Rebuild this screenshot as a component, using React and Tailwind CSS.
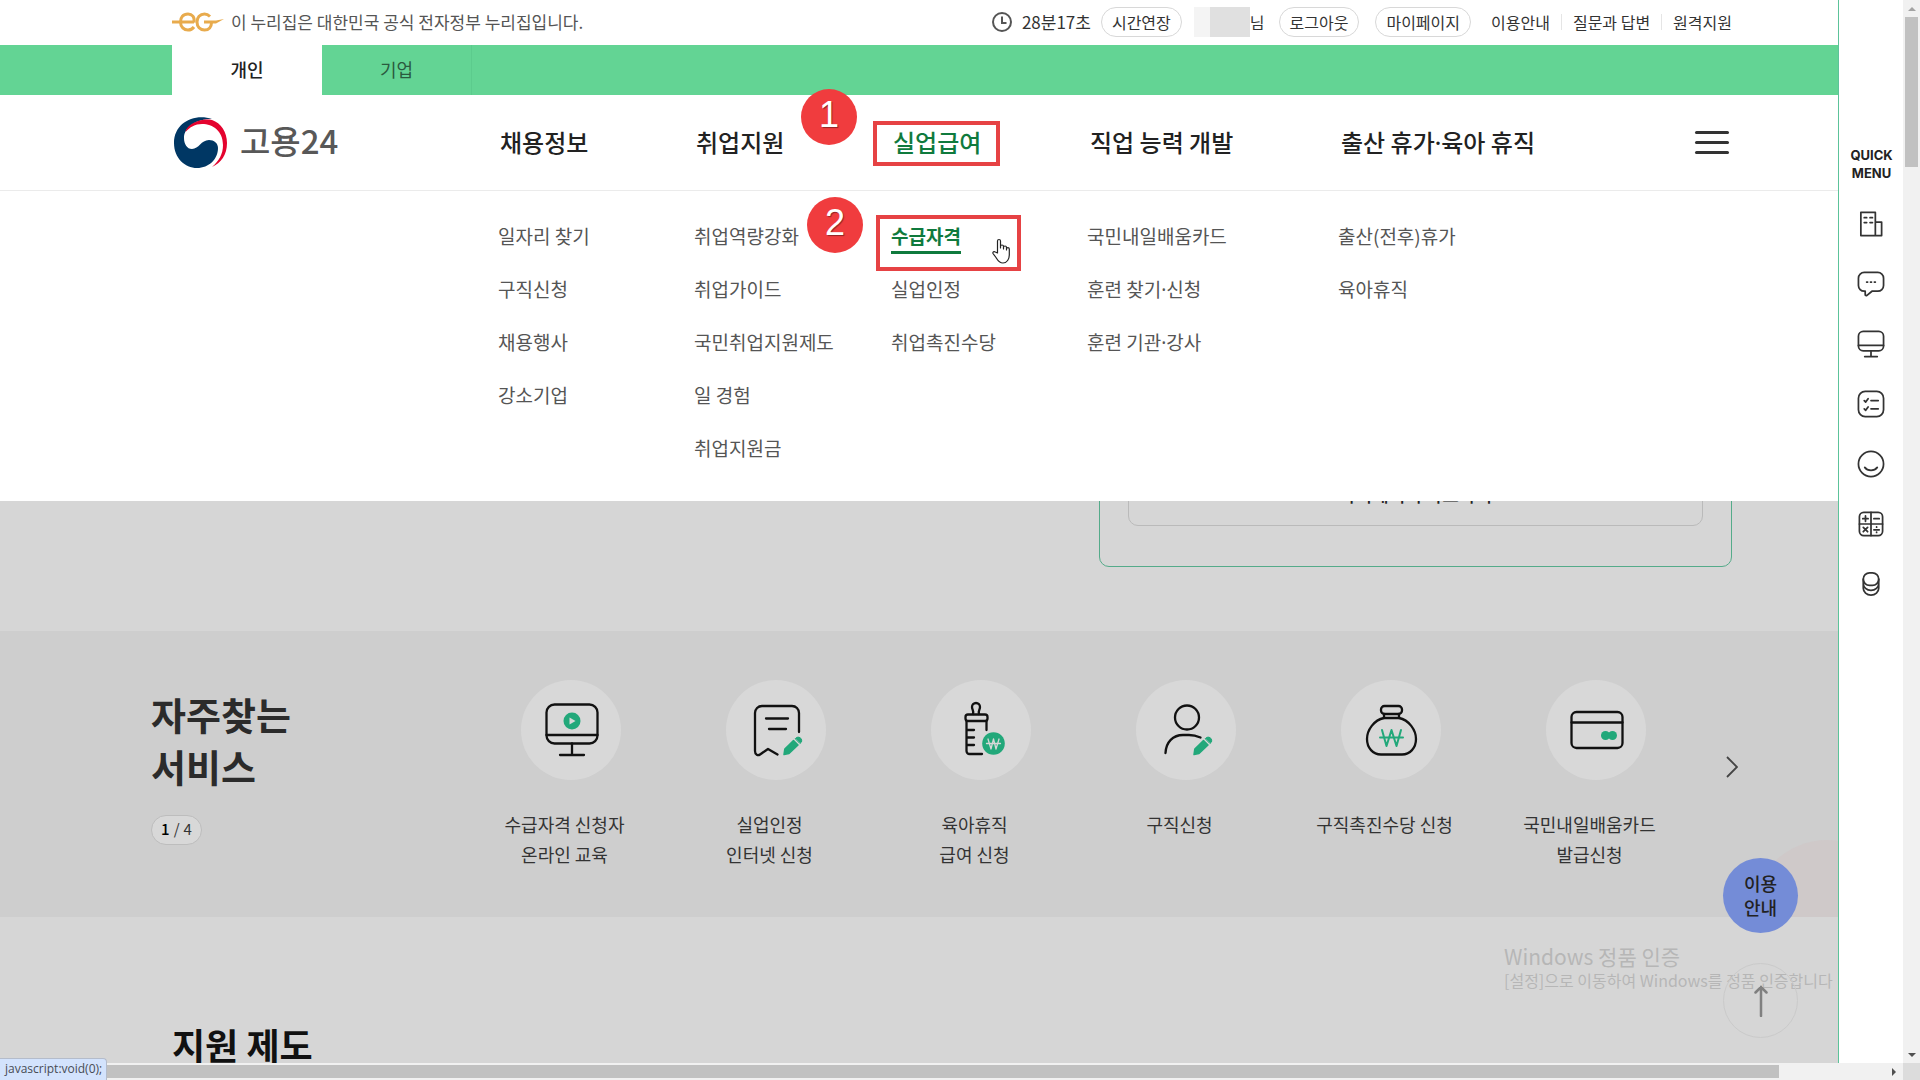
import React from "react";

const menus = [
  {
    title: "채용정보",
    items: ["일자리 찾기", "구직신청", "채용행사", "강소기업"],
  },
  {
    title: "취업지원",
    items: ["취업역량강화", "취업가이드", "국민취업지원제도", "일 경험", "취업지원금"],
  },
  {
    title: "실업급여",
    items: ["수급자격", "실업인정", "취업촉진수당"],
    step: 1,
  },
  {
    title: "직업 능력 개발",
    items: ["국민내일배움카드", "훈련 찾기·신청", "훈련 기관·강사"],
  },
  {
    title: "출산 휴가·육아 휴직",
    items: ["출산(전후)휴가", "육아휴직"],
  },
];

const GREEN = "#22a87a";

const Pencil = () => (
  <g fill={GREEN}>
    <path d="M58 74.5L58.8 69L67.500 60.500L72 65L63 73.500Z" stroke={GREEN} strokeWidth="1.5" strokeLinejoin="round" />
    <path d="M69.500 58.500L71 57.300A3.600 3.600 0 0 1 75.500 62L74.200 63.300Z" stroke={GREEN} strokeWidth="1" />
  </g>
);

const services = [
  {
    label: ["수급자격 신청자", "온라인 교육"],
    icon: (
      <>
        <rect x="25.5" y="24.5" width="51" height="39" rx="8" />
        <path d="M25.5 55H76.5M51 63.5V75M39 75H63" />
        <circle cx="51" cy="41" r="8.5" fill={GREEN} stroke="none" />
        <path d="M48.5 37.5L54.5 41L48.5 44.5Z" fill="#d8d8d8" stroke="none" />
      </>
    ),
  },
  {
    label: ["실업인정", "인터넷 신청"],
    icon: (
      <>
        <path d="M73 52V33a7 7 0 0 0-7-7H36a7 7 0 0 0-7 7V71c0 4 3 5 5 3.500L42 69L51.500 74.500" />
        <path d="M40 38.500H62M43 49H60" />
        <Pencil />
      </>
    ),
  },
  {
    label: ["육아휴직", "급여 신청"],
    icon: (
      <>
        <path d="M42 34c1-4-1-4-1-7a4 4 0 0 1 8 0c0 3-2 3-1 7" />
        <rect x="34.500" y="34.500" width="22" height="6.500" rx="2.500" />
        <path d="M35.500 41V71a3 3 0 0 0 3 3H51M55.500 41V50M35.500 50H43M35.500 57.500H43M35.500 65H43" />
        <circle cx="62.500" cy="63.500" r="11.300" fill={GREEN} stroke="none" />
        <path d="M57 59L60 69L62.500 59L65 69L68 59M55.500 63.500H69.500" stroke="#d8d8d8" strokeWidth="1.300" />
      </>
    ),
  },
  {
    label: ["구직신청"],
    icon: (
      <>
        <circle cx="51" cy="37.500" r="12" />
        <path d="M29.500 73C30 62 37 55 47 55H53C57 55 61 56 64.500 57.500" />
        <Pencil />
      </>
    ),
  },
  {
    label: ["구직촉진수당 신청"],
    icon: (
      <>
        <rect x="40" y="26" width="21" height="8" rx="3.500" />
        <path d="M43 34V38M58 34V38" />
        <path d="M43 38H58C68 40 75 50 75 59C75 68 69 74.500 61 74.500H40C32 74.500 26 68 26 59C26 50 33 40 43 38Z" />
        <path d="M41 50L45.500 66L50.500 50L55.500 66L60 50M39 57.500H62" stroke={GREEN} strokeWidth="2" />
      </>
    ),
  },
  {
    label: ["국민내일배움카드", "발급신청"],
    icon: (
      <>
        <rect x="25.500" y="32" width="51" height="36" rx="5" />
        <path d="M25.500 42.500H76.500" />
        <circle cx="59.500" cy="55.500" r="4.500" fill={GREEN} stroke="none" />
        <circle cx="66.500" cy="55.500" r="4.500" fill={GREEN} stroke="none" />
      </>
    ),
  },
];

const quickIcons = [
  {
    name: "기업",
    icon: <path d="M3.500 2.500H18.500V26.500H3.500ZM18.500 12.500H25V26.500H18.500M7 8H9.500M13 8H15.500M7 13H9.500M13 13H15.500" />,
  },
  {
    name: "상담",
    icon: (
      <>
        <path d="M7 2.500H21a6 6 0 0 1 6 6V16a6 6 0 0 1-6 6H15L9.500 26.500Q8 27 8 25V22H7a6 6 0 0 1-6-6V8.500a6 6 0 0 1 6-6Z" />
        <path d="M9.500 12.500H10.500M13.500 12.500H14.500M17.500 12.500H18.500" />
      </>
    ),
  },
  {
    name: "화상",
    icon: (
      <>
        <rect x="1" y="1.500" width="26" height="20" rx="5" />
        <path d="M1 16H27M14 21.500V27.500M7.500 27.500H20.500" />
      </>
    ),
  },
  {
    name: "체크리스트",
    icon: (
      <>
        <rect x="1" y="1.500" width="26" height="26" rx="7" />
        <path d="M7 11L8.500 12.500L11 9M14 11H21.500M7 19.500L8.500 21L11 17.500M14 19.500H21.500" />
      </>
    ),
  },
  {
    name: "만족도",
    icon: (
      <>
        <circle cx="14" cy="14.500" r="13" />
        <path d="M7.500 18C10.500 22 17.500 22 20.500 18" />
      </>
    ),
  },
  {
    name: "계산기",
    icon: (
      <>
        <rect x="2" y="2.500" width="24" height="24" rx="4.500" />
        <path d="M14 2.500V26.500M2 14.500H26M5.500 9H11M8.300 6.200V11.700M17 9H22.500M6 18L10.500 22.500M10.500 18L6 22.500M17 20.500H22.500M19.800 17.500V17.800M19.800 23V23.300" />
      </>
    ),
  },
  {
    name: "지원금",
    icon: (
      <>
        <rect x="6" y="3" width="16" height="13" rx="6.500" />
        <path d="M6 9.500V19a8 7 0 0 0 16 0V9.500M6 14a8 7 0 0 0 16 0" />
      </>
    ),
  },
];

// The CJK middle dot is too wide between words, so it takes a latin font
const Label = ({ text }) =>
  text.split("·").map((part, i) => (
    <React.Fragment key={part}>
      {i > 0 && <span className="font-['Noto_Sans',sans-serif] leading-none">·</span>}
      {part}
    </React.Fragment>
  ));

// Numbered red marker used for the guide steps
const StepBadge = ({ number, className }) => (
  <span
    className={`absolute flex size-14 items-center justify-center rounded-full bg-[#f03c3e] pb-1 font-['Liberation_Sans',sans-serif] text-4xl leading-none font-normal text-white [text-shadow:1px_1px_1px_#00000066] ${className}`}
  >
    {number}
  </span>
);

const HandCursor = () => (
  <svg viewBox="0 0 18 26" className="absolute top-[29px] left-[101px] h-[26px] w-[18px]" fill="#fff" stroke="#222" strokeWidth="1.2" strokeLinejoin="round">
    <path d="M5.500 15V3a1.500 1.500 0 0 1 3 0V10V8.500a1.500 1.500 0 0 1 3 0V11V9.500a1.500 1.500 0 0 1 3 0V12V11a1.400 1.400 0 0 1 2.800 0V17C17.300 21 15 25 11 25C7 25 5.500 22 4 19.500L1 15.500C0.500 14 2 13 3.300 14Z" />
  </svg>
);

const TopBar = () => (
  <div className="flex h-[45px] items-center justify-between pr-[106px] pb-px pl-[172px] text-base text-[#333]">
    <p className="flex items-center gap-[7px] text-[17px] text-[#555]">
      <svg viewBox="0 0 52 20" className="h-5 w-[52px]" fill="none" stroke="#e8ab4d" strokeWidth="3" aria-hidden="true">
        <path d="M0 10H22" />
        <path d="M22 10.500C23 5 20 2 16 2C11 2 8.500 5.500 8.500 10C8.500 15 12 18 16 18C18.500 18 20.500 17 22 15" />
        <path d="M38 4.500C36.500 3 34.500 2 32.500 2C28 2 25 5.500 25 10C25 14.500 28 18 32.500 18C37 18 39.500 15 39.500 10.500" />
        <path d="M32 8.500H44L52 7L44 11.500H32Z" fill="#e8ab4d" stroke="none" />
      </svg>
      이 누리집은 대한민국 공식 전자정부 누리집입니다.
    </p>
    <div className="flex items-center">
      <svg viewBox="0 0 20 20" className="mr-2.5 size-5" fill="none" stroke="#555" strokeWidth="2" aria-hidden="true">
        <circle cx="10" cy="10" r="9" />
        <path d="M10 4.500V11H14.500" />
      </svg>
      <span className="mr-2.5 text-[17px]">28분17초</span>
      <button className="h-[30px] rounded-full border border-[#d8d8d8] px-2.5 leading-7">시간연장</button>
      <span className="ml-3 h-[30px] w-4 bg-[#f4f4f4]" />
      <span className="h-[30px] w-10 bg-[#e0e0e0]" />
      <span className="mr-3.5">님</span>
      <button className="mr-4 h-[30px] rounded-full border border-[#d8d8d8] px-2.5 leading-7">로그아웃</button>
      <button className="mr-5 h-[30px] rounded-full border border-[#d8d8d8] px-2.5 leading-7">마이페이지</button>
      <a href="#guide">이용안내</a>
      <span className="mx-[11px] h-4 w-px bg-[#e5e5e5]" />
      <a href="#qna">질문과 답변</a>
      <span className="mx-[11px] h-4 w-px bg-[#e5e5e5]" />
      <a href="#remote">원격지원</a>
    </div>
  </div>
);

const Header = () => (
  <header className="relative z-10 bg-white">
    <TopBar />
    <div className="flex h-[50px] bg-[#63d494] pl-[172px] text-lg">
      <button className="w-[150px] bg-white pb-0.5 font-medium text-[#222]">개인</button>
      <button className="w-[150px] border-r border-[#5ccb8d] pb-0.5 text-[#2b5a3f]">기업</button>
    </div>

    {/* Main navigation */}
    <div className="flex h-24 items-center border-b border-[#ebebeb] pr-[106px] pl-[172px]">
      <a href="#home" className="flex w-[326px] items-center gap-3 text-[33px] leading-none font-medium text-[#585858]">
        <svg viewBox="0 0 54 52" className="ml-0.5 h-[52px] w-[54px]" aria-hidden="true">
          <path fill="#003764" d="M38 2C20-4 0 6 0 26C0 41 11 51 23 51C35 51 44 42 44 31C44 26 40 23 35 23C27 23 25 32 18 32C13 32 10 27 10 21C10 10 22 2 38 2Z" />
          <path fill="#e4032e" d="M14 10C20 4 30 1.500 38 3C47 6 53 15 53 26C53 38 47 46 38 50C45 44 49 37 49 28C49 14 39 7 28 7C21 7 16 10 11.500 15C11.500 13 13 11 14 10Z" />
        </svg>
        <span className="pb-1">고용24</span>
      </a>
      <nav className="grid flex-1 grid-cols-[196px_197px_197px_251px_1fr] pb-0.5 pl-0.5">
        {menus.map((menu) => (
          <div key={menu.title} className="relative">
            <a
              href="#menu"
              className={`text-2xl font-medium ${menu.step ? "text-[#0f7a3d]" : "text-[#222]"}`}
            >
              <Label text={menu.title} />
            </a>
            {menu.step && (
              <>
                <span className="absolute -top-[5px] -left-5 h-[45px] w-[127px] border-4 border-[#e64244]" />
                <StepBadge number={menu.step} className="-top-[37px] -left-[92px]" />
              </>
            )}
          </div>
        ))}
      </nav>
      <button aria-label="전체메뉴" className="mr-[3px] flex w-[34px] flex-col gap-[7px]">
        <span className="h-[3px] w-full rounded-full bg-[#333]" />
        <span className="h-[3px] w-full rounded-full bg-[#333]" />
        <span className="h-[3px] w-full rounded-full bg-[#333]" />
      </button>
    </div>

    {/* Opened sub menu */}
    <div className="grid grid-cols-[196px_197px_196px_251px_1fr] pt-[18px] pb-[27px] pl-[498px] text-[19px] leading-[53px] text-[#555]">
      {menus.map((menu) => (
        <ul key={menu.title}>
          {menu.items.map((item) =>
            item === "수급자격" ? (
              <li key={item} className="relative">
                <a href="#sub" className="border-b-[3px] border-[#0f7a3d] pb-0.5 font-bold text-[#0f7a3d]">
                  {item}
                </a>
                <span className="absolute top-1.5 -left-[15px] h-14 w-[145px] border-4 border-[#e64244]" />
                <StepBadge number={2} className="-top-3 -left-[84px]" />
                <HandCursor />
              </li>
            ) : (
              <li key={item}>
                <a href="#sub">
                  <Label text={item} />
                </a>
              </li>
            )
          )}
        </ul>
      ))}
    </div>
  </header>
);

const Services = () => (
  <section className="relative flex h-[286px] overflow-hidden bg-[#cecece] pr-[66px] pl-[151px]">
    <span className="absolute top-[209px] -right-16 size-[150px] rounded-full bg-[#cfc9c9]" />
    <div className="w-[311px] pt-[57px]">
      <h2 className="text-[38px] leading-[52px] font-bold text-[#2b2b2b]">
        자주찾는
        <br />
        서비스
      </h2>
      <p className="mt-[23px] flex h-[30px] w-[51px] items-center justify-center gap-1 rounded-full border border-[#bdbdbd] bg-[#d8d8d8] pb-px text-[15px] text-[#333]">
        <b className="font-medium text-black">1</b> / <span>4</span>
      </p>
    </div>
    <ul className="grid flex-1 grid-cols-6 pt-[49px]">
      {services.map((service) => (
        <li key={service.label[0]}>
          <a href="#service" className="flex flex-col items-center text-center text-lg leading-[30px] text-[#333]">
            <span className="mb-[29px] ml-3 size-[100px] rounded-full bg-[#d8d8d8]">
              <svg viewBox="0 0 100 100" className="size-full" fill="none" stroke="#111" strokeWidth="2.3" strokeLinecap="round" strokeLinejoin="round" aria-hidden="true">
                {service.icon}
              </svg>
            </span>
            {service.label.map((line) => (
              <span key={line}>{line}</span>
            ))}
          </a>
        </li>
      ))}
    </ul>
    <button aria-label="다음" className="flex w-20 items-center justify-center pb-3.5">
      <svg viewBox="0 0 12 22" className="h-[22px] w-3" fill="none" stroke="#444" strokeWidth="1.8">
        <path d="M1 1L11 11L1 21" />
      </svg>
    </button>
  </section>
);

const QuickMenu = () => (
  <aside className="flex w-[65px] flex-col items-center border-l border-[#5cc39a] bg-white pt-[146px]">
    <h2 className="pl-px text-center font-[Inter,sans-serif] text-[13px] leading-[18px] font-bold text-[#222]">
      QUICK
      <br />
      MENU
    </h2>
    <div className="mt-7 flex flex-col gap-8">
      {quickIcons.map((item) => (
        <button key={item.name} aria-label={item.name} className="size-7">
          <svg viewBox="0 0 28 29" className="size-full" fill="none" stroke="#333" strokeWidth="1.8" strokeLinecap="round" strokeLinejoin="round">
            {item.icon}
          </svg>
        </button>
      ))}
    </div>
  </aside>
);

const Floating = () => (
  <>
    <div className="pointer-events-none absolute right-0 bottom-[73px] w-[334px] whitespace-nowrap text-[#b6b6b6]">
      <p className="text-[21px] leading-7">Windows 정품 인증</p>
      <p className="text-base leading-5">[설정]으로 이동하여 Windows를 정품 인증합니다</p>
    </div>
    <div className="absolute right-10 bottom-[25px] flex flex-col gap-[30px]">
      <button className="size-[75px] rounded-full bg-[#748cd7] pb-0.5 text-lg leading-6 font-medium text-[#222]">
        이용
        <br />
        안내
      </button>
      <button aria-label="맨 위로" className="flex size-[75px] items-center justify-center rounded-full border border-[#cacaca]">
        <svg viewBox="0 0 14 32" className="h-8 w-3.5" fill="none" stroke="#808080" strokeWidth="2.5" strokeLinecap="round">
          <path d="M7 31V2M1.500 7.500L7 2L12.500 7.500" />
        </svg>
      </button>
    </div>
  </>
);

const App = () => {
  return (
    <div className="flex h-screen flex-col overflow-hidden bg-[#f1f1f1] font-['Noto_Sans_CJK_KR',sans-serif]">
      <div className="flex min-h-0 flex-1">
        <main className="relative min-w-0 flex-1 overflow-hidden bg-[#d6d6d6]">
          <Header />

          {/* My page card, partly under the opened menu */}
          <section className="flex h-[130px] items-end justify-end overflow-hidden pr-[106px] pb-16">
            <div className="w-[633px] rounded-[10px] border border-[#55ab8a] px-7 pt-10 pb-10">
              <button className="block h-[60px] w-full rounded-[10px] border border-[#bababa] pb-1 text-lg font-medium text-[#222]">
                마이페이지 바로가기
              </button>
            </div>
          </section>

          <Services />

          <section className="pt-[101px] pl-[172px]">
            <h2 className="text-4xl leading-[52px] font-bold text-[#111]">지원 제도</h2>
          </section>
          <Floating />
        </main>

        <QuickMenu />

        {/* Vertical scroll bar */}
        <div className="flex w-[17px] flex-col items-center justify-between pt-[7px] pb-[6px]">
          <div className="flex w-full flex-col items-center gap-1.5">
            <span className="border-x-4 border-b-4 border-x-transparent border-b-[#a3a3a3]" />
            <span className="h-[150px] w-[13px] bg-[#c1c1c1]" />
          </div>
          <span className="border-x-4 border-t-4 border-x-transparent border-t-[#505050]" />
        </div>
      </div>

      {/* Horizontal scroll bar */}
      <div className="relative flex h-[17px] items-center">
        <span className="mr-[113px] h-[13px] flex-1 bg-[#c1c1c1]" />
        <span className="mr-[3px] border-y-4 border-l-4 border-y-transparent border-l-[#505050]" />
        <span className="h-full w-[21px] border-l-4 border-[#f1f1f1] bg-[#dcdcdc]" />
        <span className="absolute bottom-0 left-0 h-[22px] rounded-tr border-t border-r border-[#b4bccb] bg-[#d3e3fd] pr-1 pl-[5px] font-['Open_Sans',sans-serif] text-xs leading-5 text-[#474c55]">
          javascript:void(0);
        </span>
      </div>
    </div>
  );
};

export default App;
